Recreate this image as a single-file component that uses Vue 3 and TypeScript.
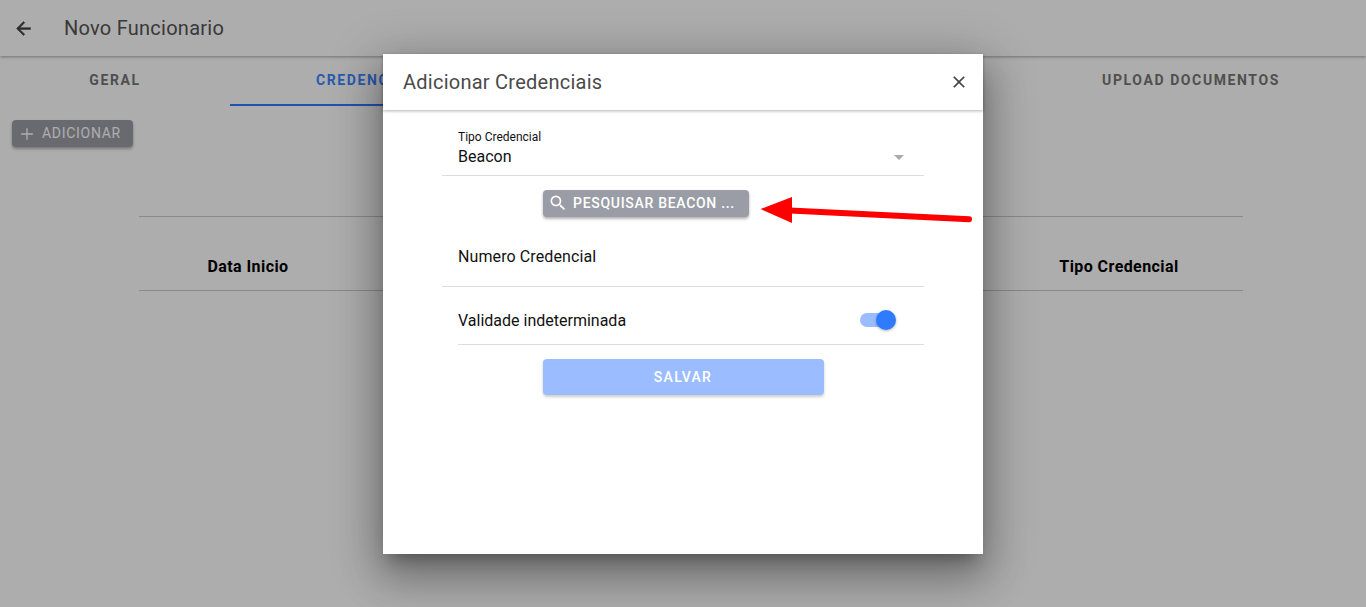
<script setup lang="ts">
const tabs = ['Geral', 'Credenciais', '', 'Upload Documentos'];
const columns = ['Data Inicio', '', '', '', 'Tipo Credencial'];
</script>

<template>
  <div class="page">
    <header class="toolbar">
      <svg class="back" width="21" height="21" viewBox="0 0 24 24" fill="currentColor">
        <path d="M20 11H7.83l5.59-5.59L12 4l-8 8 8 8 1.41-1.41L7.83 13H20v-2z" />
      </svg>
      <span class="toolbar-title">Novo Funcionario</span>
    </header>

    <nav class="tabs">
      <div v-for="(tab, i) in tabs" :key="i" class="tab" :class="{ active: i === 1 }">{{ tab }}</div>
    </nav>

    <div class="content">
      <button class="btn add-btn">
        <svg width="20" height="20" viewBox="0 0 24 24" fill="currentColor">
          <path d="M19 12.8h-6.2V19h-1.6v-6.2H5v-1.6h6.2V5h1.6v6.2H19v1.6z" />
        </svg>
        <span class="add-label">Adicionar</span>
      </button>
      <div class="table-head">
        <div v-for="(col, i) in columns" :key="i" class="th">{{ col }}</div>
      </div>
    </div>

    <div class="overlay">
      <section class="dialog">
        <div class="dialog-header">
          <h2 class="dialog-title">Adicionar Credenciais</h2>
          <svg class="close" width="20" height="20" viewBox="0 0 24 24" fill="currentColor">
            <path d="M19 6.41 17.59 5 12 10.59 6.41 5 5 6.41 10.59 12 5 17.59 6.41 19 12 13.41 17.59 19 19 17.59 13.41 12z" />
          </svg>
        </div>

        <div class="form">
          <div class="field select-field">
            <label class="field-label">Tipo Credencial</label>
            <div class="select-value">
              <span>Beacon</span>
              <i class="caret"></i>
            </div>
          </div>

          <button class="btn search-btn">
            <svg width="20" height="20" viewBox="0 0 24 24" fill="currentColor">
              <path d="M15.5 14h-.79l-.28-.27A6.47 6.47 0 0 0 16 9.5 6.5 6.5 0 1 0 9.5 16c1.61 0 3.09-.59 4.23-1.57l.27.28v.79l5 4.99L20.49 19l-4.99-5zm-6 0C7.01 14 5 11.99 5 9.5S7.01 5 9.5 5 14 7.01 14 9.5 11.99 14 9.5 14z" />
            </svg>
            <span class="search-label">Pesquisar Beacon ...</span>
          </button>

          <div class="field number-field">Numero Credencial</div>

          <div class="toggle-row">
            <span>Validade indeterminada</span>
            <div class="toggle">
              <div class="track"></div>
              <div class="thumb"></div>
            </div>
          </div>

          <button class="save-btn">Salvar</button>
        </div>
      </section>

      <svg class="annotation" width="220" height="40" viewBox="0 0 220 40">
        <path d="M34 16.5 213 25.2" stroke="#ff0000" stroke-width="6" stroke-linecap="round" fill="none" />
        <path d="M4.5 15 36 3V29z" fill="#ff0000" />
      </svg>
    </div>
  </div>
</template>

<style scoped>
.page {
  width: 1366px;
  height: 607px;
  overflow: hidden;
  position: relative;
  background: #fff;
  font-family: Roboto, "Liberation Sans", sans-serif;
}

.toolbar {
  height: 56px;
  display: flex;
  align-items: center;
  padding-left: 13px;
  color: #555;
  box-shadow: 0 1px 3px rgba(0, 0, 0, 0.35);
  position: relative;
}

.back {
  color: #444;
  stroke: currentColor;
  stroke-width: 0.6;
}

.toolbar-title {
  margin-left: 30px;
  font-size: 20px;
  letter-spacing: 0.25px;
}

.tabs {
  display: grid;
  grid-template-columns: 230px 278px 508px 350px;
  height: 50px;
}

.tab {
  display: flex;
  align-items: center;
  justify-content: center;
  text-transform: uppercase;
  font-size: 14px;
  font-weight: 700;
  letter-spacing: 1.6px;
  color: #757575;
  border-bottom: 2px solid transparent;
}

.tab.active {
  color: #3f85ff;
  border-bottom-color: #2f7bff;
}

.content {
  padding: 14px 12px 0;
}

.btn {
  display: flex;
  align-items: center;
  border: 0;
  border-radius: 4px;
  background: #9a9da5;
  color: #fff;
  font-family: inherit;
  font-size: 14px;
  font-weight: 500;
  letter-spacing: 0.7px;
  text-transform: uppercase;
  box-shadow: 0 2px 3px rgba(0, 0, 0, 0.3);
  padding: 0;
}

.add-btn {
  width: 121px;
  height: 27px;
  padding-left: 5px;
  gap: 5px;
  font-weight: 400;
}

.add-label {
  margin-bottom: 2px;
}

.table-head {
  display: grid;
  grid-template-columns: 218px 1fr 1fr 1fr 248px;
  margin: 69px 0 0 127px;
  width: 1104px;
  height: 73px;
  border-top: 1px solid #ccc;
  border-bottom: 1px solid #ccc;
}

.th {
  display: flex;
  align-items: center;
  justify-content: center;
  padding-top: 25px;
  font-size: 16px;
  font-weight: 700;
  letter-spacing: 0.42px;
  color: #000;
}

.overlay {
  position: absolute;
  inset: 0;
  display: flex;
  align-items: center;
  justify-content: center;
  background: rgba(0, 0, 0, 0.32);
}

.dialog {
  width: 600px;
  height: 500px;
  display: flex;
  flex-direction: column;
  background: #fff;
  box-shadow: 0 11px 15px -7px rgba(0, 0, 0, 0.3), 0 24px 38px 3px rgba(0, 0, 0, 0.22), 0 9px 46px 8px rgba(0, 0, 0, 0.2);
}

.dialog-header {
  height: 56px;
  flex: none;
  display: flex;
  align-items: center;
  justify-content: space-between;
  padding: 0 14px 0 20px;
  color: #4a4a4a;
  box-shadow: 0 1px 3px rgba(0, 0, 0, 0.3);
}

.dialog-title {
  margin: 0;
  font-size: 20px;
  font-weight: 400;
  letter-spacing: 0.25px;
}

.close {
  color: #444;
}

.form {
  display: flex;
  flex-direction: column;
  align-items: center;
  padding: 20px 59px 0;
}

.field {
  width: 482px;
  border-bottom: 1px solid #ddd;
  padding-left: 16px;
  box-sizing: border-box;
  color: #111;
}

.select-field {
  height: 46px;
}

.field-label {
  display: block;
  font-size: 12px;
  line-height: 14px;
}

.select-value {
  display: flex;
  align-items: center;
  justify-content: space-between;
  font-size: 16px;
  line-height: 20px;
  padding: 3px 20px 0 0;
}

.caret {
  width: 0;
  height: 0;
  margin-top: 2px;
  border-left: 5px solid transparent;
  border-right: 5px solid transparent;
  border-top: 5px solid #aaa;
}

.search-btn {
  align-self: flex-start;
  width: 206px;
  height: 27px;
  margin: 14px 0 0 101px;
  padding-left: 5px;
  gap: 5px;
  font-size: 14px;
  letter-spacing: 0.7px;
}

.search-btn svg {
  flex: none;
}

.search-label {
  white-space: nowrap;
}

.number-field {
  height: 70px;
  display: flex;
  align-items: flex-start;
  padding-top: 30px;
  font-size: 16px;
  line-height: 19px;
  letter-spacing: 0.1px;
}

.toggle-row {
  width: 466px;
  height: 58px;
  align-self: flex-end;
  display: flex;
  align-items: center;
  justify-content: space-between;
  padding: 10px 28px 0 0;
  box-sizing: border-box;
  border-bottom: 1px solid #ddd;
  font-size: 16px;
  color: #111;
}

.toggle {
  position: relative;
  width: 36px;
  height: 20px;
}

.track {
  position: absolute;
  left: 0;
  top: 3px;
  width: 34px;
  height: 14px;
  border-radius: 7px;
  background: #9bbdff;
}

.thumb {
  position: absolute;
  right: 0;
  top: 0;
  width: 20px;
  height: 20px;
  border-radius: 50%;
  background: #2f7bff;
  box-shadow: 0 1px 3px rgba(0, 0, 0, 0.3);
}

.save-btn {
  width: 281px;
  height: 36px;
  margin-top: 14px;
  border: 0;
  border-radius: 4px;
  background: #9bbdff;
  color: #fff;
  font-family: inherit;
  font-size: 14px;
  font-weight: 500;
  letter-spacing: 1.3px;
  text-transform: uppercase;
  box-shadow: 0 2px 3px rgba(0, 0, 0, 0.2);
}

.annotation {
  position: absolute;
  left: 756px;
  top: 194px;
}
</style>

<style>
html, body {
  margin: 0;
  overflow: hidden;
}
</style>
